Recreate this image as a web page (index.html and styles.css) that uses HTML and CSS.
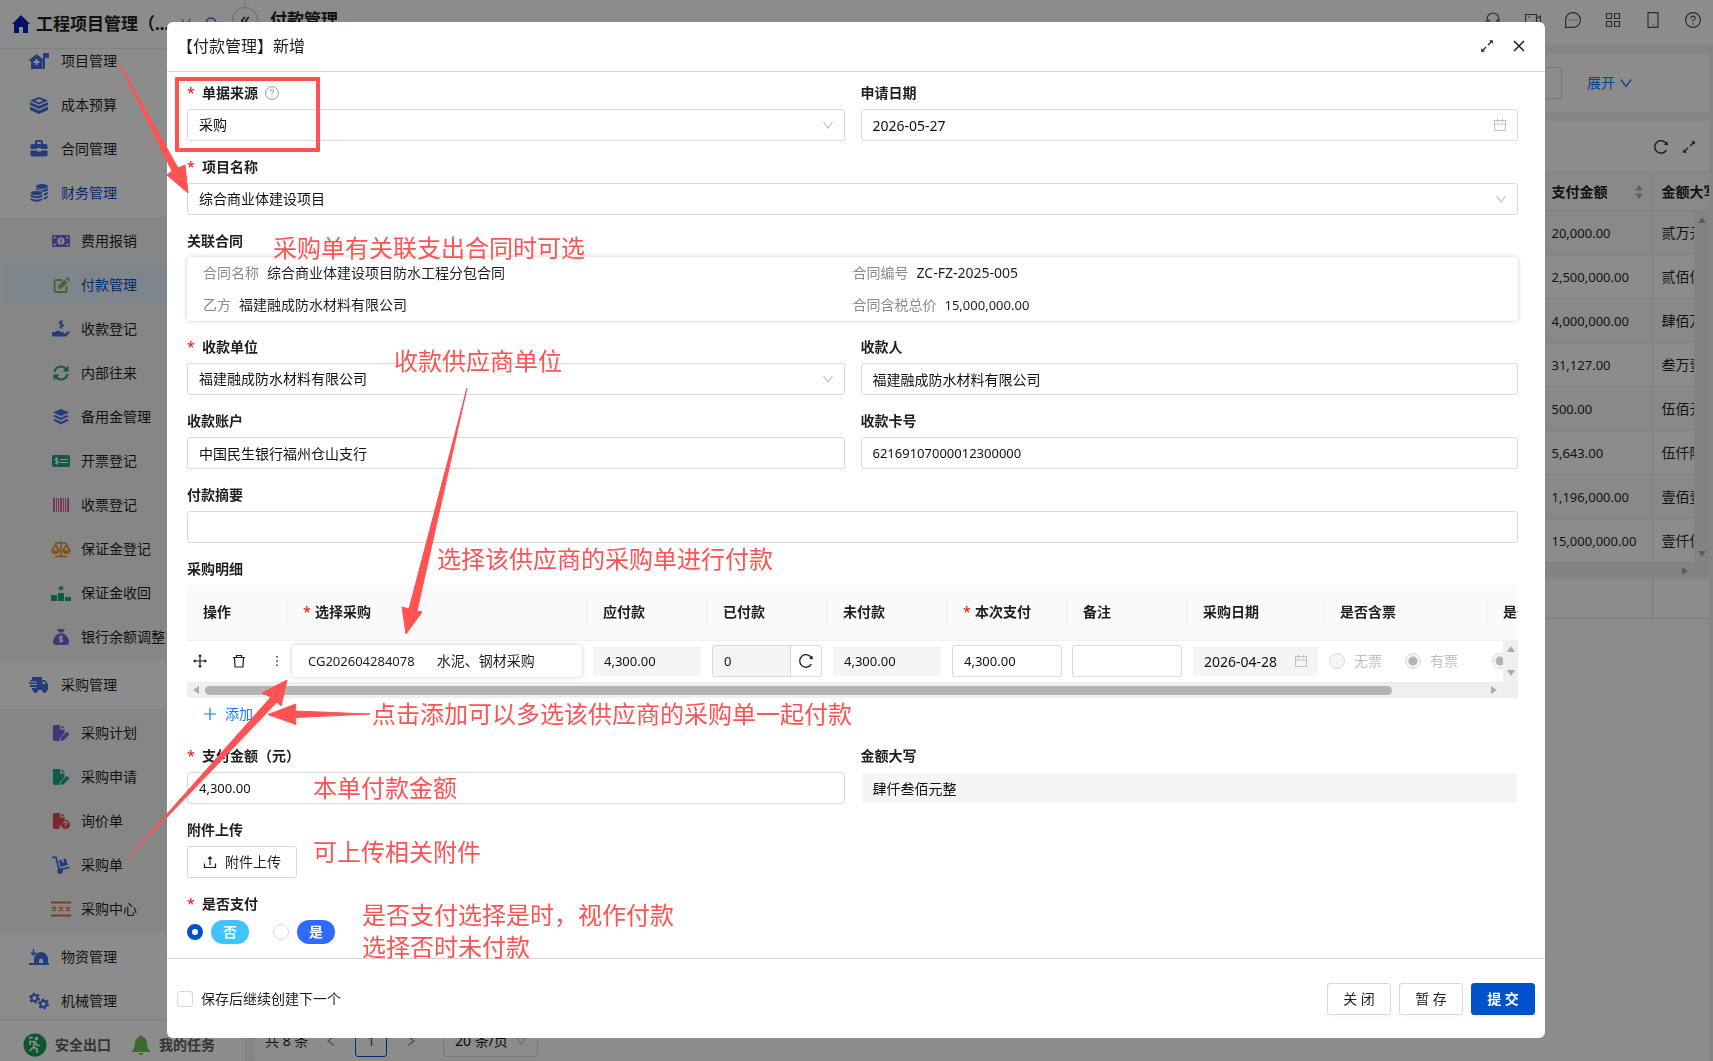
FILE: index.html
```html
<!DOCTYPE html>
<html lang="zh-CN">
<head>
<meta charset="utf-8">
<title>付款管理</title>
<link rel="stylesheet" href="styles.css">
</head>
<body>
<svg class="defs" aria-hidden="true">
  <symbol id="chev" viewBox="0 0 12 12"><path d="M1.500 3 6 9l4.500-6" fill="none" stroke="currentColor" stroke-width="1.100"/></symbol>
  <symbol id="cal" viewBox="0 0 14 14"><path d="M1.500 2.500h11v10h-11zM1.500 6h11M4.500 1v3M9.500 1v3" fill="none" stroke="currentColor"/></symbol>
  <symbol id="expand" viewBox="0 0 14 14"><path d="M8 6l3-3M6 8l-3 3" stroke="currentColor" stroke-width="1.200" fill="none"/><path d="M12.800 1.200v3.600L9.200 1.200zM1.200 12.800V9.200l3.600 3.600z" fill="currentColor"/></symbol>
  <symbol id="reload" viewBox="0 0 16 16"><path d="M13.400 11.200A6.300 6.300 0 1 1 13.600 5" fill="none" stroke="currentColor" stroke-width="1.300"/><path d="M14.600 2.600v3.800l-3.600-.8z" fill="currentColor"/></symbol>
  <symbol id="file" viewBox="0 0 20 20"><path d="M2 1h7v5h5v4l-5 5-1 4H3q-2 0-2-2V2q0-1 1-1zM10.500 1 14 4.600h-3.500z" fill="currentColor"/></symbol>
  <symbol id="pen" viewBox="0 0 20 20"><path d="m10 15 6.500-6.500 3 3L13 18l-3.600.8z" fill="currentColor"/></symbol>
</svg>

<div class="app">
  <aside class="side">
    <header class="side-head">
      <svg class="i18 navy" viewBox="0 0 18 18"><path d="M9 0 0 9h2v9h5v-6h4v6h5V9h2l-3-3z" fill="currentColor"/></svg>
      <strong>工程项目管理（...</strong>
      <svg class="i12 link"><use href="#chev"/></svg>
      <svg class="i14 link" viewBox="0 0 14 14"><circle cx="7" cy="6" r="5" fill="none" stroke="currentColor" stroke-width="1.400"/></svg>
    </header>
    <nav class="menu-clip">
      <ul class="menu">
        <li><a href="#"><svg class="i20 blue" viewBox="0 0 20 20"><path d="M0 9 7.500 3 15 9v1h-1.500v8H2v-8H0zM6.500 8v2h-2v2h2v2h2v-2h2v-2h-2V8z" fill="currentColor" fill-rule="evenodd"/><path d="M14 2h6v5h-4v11h-2z" fill="currentColor"/></svg>项目管理</a></li>
        <li><a href="#"><svg class="i20 blue" viewBox="0 0 20 20"><path d="m10 2 9 3.500-9 4-9-4zM1 7l9 4 9-4v3l-9 4-9-4zM1 11.500l9 4 9-4V15l-9 4-9-4z" fill="currentColor"/><path d="m6 5.500 4-1.500 4 1.500-4 2z" fill="#fff"/></svg>成本预算</a></li>
        <li><a href="#"><svg class="i20 blue" viewBox="0 0 20 20"><path d="M6 5V3q0-2 2-2h4q2 0 2 2v2h3q1.500 0 1.500 1.500V10H12V9H8v1H1.500V6.500Q1.500 5 3 5zm2 0h4V3H8zM1.500 11.500H8v1h4v-1h6.500V16q0 1.500-1.500 1.500H3Q1.500 17.500 1.500 16z" fill="currentColor" fill-rule="evenodd"/></svg>合同管理</a></li>
        <li><a href="#" class="active"><svg class="i20 blue" viewBox="0 0 20 20"><g fill="currentColor"><ellipse cx="13" cy="3.500" rx="6" ry="2.500"/><path d="M7 5q6 4 12 0v2q-1.500 2-5 2-2-2-7-2zM15 10q3 0 4-1.500v2q-1 2-4 2zM15 14q3 0 4-1.500v2q-1 1.500-4 2z"/><ellipse cx="7.500" cy="10" rx="6" ry="2"/><path d="M1.500 11.500q6 3.500 12 0v2q-6 3.500-12 0zM1.500 15q6 3.500 12 0v2q-6 3.500-12 0z"/></g></svg>财务管理</a></li>
        <li class="group">
          <ul class="sub">
            <li><a href="#"><svg class="i18 purple" viewBox="0 0 18 18"><rect y="3" width="18" height="12" rx="1" fill="currentColor"/><circle cx="9" cy="9" r="3.500" fill="#fff"/><path d="M8 7.500h1.500v3M2 7V5h2M14 5h2v2M2 11v2h2M14 13h2v-2" fill="none" stroke="#fff"/><path d="M8.300 7h1.400v4H8.300z" fill="currentColor"/></svg>费用报销</a></li>
            <li><a href="#" class="active chosen"><svg class="i18 green" viewBox="0 0 18 18"><path d="M10 4H4Q2.500 4 2.500 5.500v9Q2.500 16 4 16h9q1.500 0 1.500-1.500V10" fill="none" stroke="currentColor" stroke-width="2"/><path d="m6.500 9.500 6-6 3 3-6 6-3.500.7zM13.500 2.500 15 1l3 2.500-1.500 2z" fill="currentColor"/></svg>付款管理</a></li>
            <li><a href="#"><svg class="i18 blue" viewBox="0 0 18 18"><path d="M0 12h3q3-2.500 6 0h2.500q1 1-.5 1.500H8h5l3.500-2.300q1.500 0 1 1.300L14 16.500H0z" fill="currentColor"/><path d="M11 3Q8.500 1.500 7.500 3T9.300 5.200 11 7 7 8M9.200 1v9" transform="translate(0 -1)" fill="none" stroke="currentColor" stroke-width="1.200"/></svg>收款登记</a></li>
            <li><a href="#"><svg class="i18 teal" viewBox="0 0 18 18"><path d="M2.500 8A6.500 6.500 0 0 1 14 5M15.500 10A6.500 6.500 0 0 1 4 13" fill="none" stroke="currentColor" stroke-width="2.200"/><path d="M16.500 1.500v6h-6zM1.500 16.500v-6h6z" fill="currentColor"/></svg>内部往来</a></li>
            <li><a href="#"><svg class="i18 blue" viewBox="0 0 18 18"><path d="m9 1 8 3.500L9 8 1 4.500zM3 7l6 2.700L15 7l2 1.200L9 12 1 8.200zM3 11l6 2.700L15 11l2 1.200L9 16.500 1 12.200z" fill="currentColor"/></svg>备用金管理</a></li>
            <li><a href="#"><svg class="i18 teal" viewBox="0 0 18 18"><rect y="3" width="18" height="12" rx="1.500" fill="currentColor"/><path d="M8 7.500h8M8 10.500h8M6 7Q4.500 6 3.500 7T5 9t1 1.800-3 .4M4.600 5.200v7.600" fill="none" stroke="#fff" stroke-width="1.200"/></svg>开票登记</a></li>
            <li><a href="#"><svg class="i18 pink" viewBox="0 0 18 18"><path d="M1 2h2v14H1zM4 2h1v14H4zM6 2h1v14H6zM8 2h2v14H8zM11 2h1v14h-1zM13 2h1v14h-1zM15 2h2v14h-2z" fill="currentColor"/></svg>收票登记</a></li>
            <li><a href="#"><svg class="i20 orange" viewBox="0 0 20 20"><path d="M4 4h12M10 2v15M4 17.500h12M1 12l3.500-6.500L8 12M12 12l3.500-6.500L19 12" fill="none" stroke="currentColor" stroke-width="1.600"/><path d="M0 11.500h9Q8 15 4.500 15T0 11.500zM11 11.500h9q-1 3.500-4.500 3.500T11 11.500z" fill="currentColor"/></svg>保证金登记</a></li>
            <li><a href="#"><svg class="i20 teal" viewBox="0 0 20 20"><path d="M0 12h6v6H0zM7 10h6v8H7zM14 14h6v4h-6zM10 2l.9 1.900 2.100.3-1.500 1.500.3 2.100-1.800-1-1.800 1 .3-2.100L7 4.200l2.100-.3z" fill="currentColor"/></svg>保证金收回</a></li>
            <li><a href="#"><svg class="i18 purple" viewBox="0 0 18 18"><path d="M5 1h8l-2 3.500H7zM6.500 5.500h5Q17 9 17 14q0 3-3 3H4q-3 0-3-3 0-5 5.500-8.500z" fill="currentColor"/><path d="M11 9Q9 7.800 7.800 9T9 11.200t1.500 1.600-3.200.6M9 7.200v7.600" fill="none" stroke="#fff" stroke-width="1.100"/></svg>银行余额调整</a></li>
          </ul>
        </li>
        <li><a href="#"><svg class="i20 blue" viewBox="0 0 20 20"><path d="M3 2h10v3h3l3 4v6h-1a2.500 2.500 0 0 1-5 0H9a2.500 2.500 0 0 1-5 0H3v-2h4v-1H1v-2h7V9H0V7.500h8v-1H1V5h2zm10.500 4.500V9H17l-2-2.500z" fill="currentColor" fill-rule="evenodd"/><circle cx="6.500" cy="15.500" r="2.200" fill="currentColor"/><circle cx="15.500" cy="15.500" r="2.200" fill="currentColor"/></svg>采购管理</a></li>
        <li class="group">
          <ul class="sub">
            <li><a href="#"><svg class="i18 purple" viewBox="0 0 20 20"><use href="#file"/><use href="#pen"/></svg>采购计划</a></li>
            <li><a href="#"><svg class="i18 teal" viewBox="0 0 20 20"><use href="#file"/><use href="#pen"/></svg>采购申请</a></li>
            <li><a href="#"><svg class="i18 red" viewBox="0 0 20 20"><use href="#file"/><circle cx="15" cy="14" r="5" fill="currentColor"/><path d="M13.200 13q0-2 1.800-2t1.800 1.500q0 1-1.800 1.500v1M15 16v1.200" fill="none" stroke="#fff" stroke-width="1.200"/></svg>询价单</a></li>
            <li><a href="#"><svg class="i18 blue" viewBox="0 0 20 20"><path d="M0 1.500h4.500L8 15.500l11.500-3" fill="none" stroke="currentColor" stroke-width="2"/><path d="m7.500 5 3-.8 1 3 2-.5-1-3 3-.8 2 7-8 2.200z" fill="currentColor"/><circle cx="9" cy="17" r="3" fill="currentColor"/></svg>采购单</a></li>
            <li><a href="#"><svg class="i20 rust" viewBox="0 0 20 20"><path d="M0 3.500h20M0 16.500h20" stroke="currentColor" stroke-width="2"/><path d="m1 8 4 4M5 8l-4 4M8 8l4 4M12 8l-4 4M15 8l4 4M19 8l-4 4" stroke="currentColor" stroke-width="1.500"/></svg>采购中心</a></li>
          </ul>
        </li>
        <li><a href="#"><svg class="i20 blue" viewBox="0 0 20 20"><path d="M4.500 2v6M2 5.500 4.500 8 7 5.500" fill="none" stroke="currentColor" stroke-width="1.500"/><path d="M0 16h5v-5q2-6 7-6t7 6v5h1v2H0zm10 0h4v-3q-2-3-4 0z" fill="currentColor" fill-rule="evenodd"/></svg>物资管理</a></li>
        <li><a href="#"><svg class="i20 blue" viewBox="0 0 20 20"><circle cx="5.500" cy="7" r="3" fill="none" stroke="currentColor" stroke-width="2"/><circle cx="5.500" cy="7" r="4.500" fill="none" stroke="currentColor" stroke-width="2" stroke-dasharray="2.350"/><circle cx="14.500" cy="13" r="3" fill="none" stroke="currentColor" stroke-width="2"/><circle cx="14.500" cy="13" r="4.500" fill="none" stroke="currentColor" stroke-width="2" stroke-dasharray="2.350"/></svg>机械管理</a></li>
      </ul>
    </nav>
    <footer class="side-foot">
      <a href="#"><svg class="i24" viewBox="0 0 24 24"><circle cx="12" cy="12" r="11.500" fill="#1a9c5c"/><circle cx="13.500" cy="5.500" r="1.800" fill="#fff"/><path d="M7 12V8.500h5l2 4h3M11.500 9l-1 5 3.500 2v4M10.500 14 6.500 18M7 6v-1.500h3" fill="none" stroke="#fff" stroke-width="1.700"/></svg>安全出口</a>
      <a href="#"><svg class="i20 bell" viewBox="0 0 20 20"><path d="M10 0q1.200 0 1.200 1.500Q16 3 16 8q0 5 3 8v1H1v-1q3-3 3-8 0-5 4.800-6.500Q8.800 0 10 0zM7.500 18h5Q12 20 10 20t-2.500-2z" fill="currentColor"/></svg>我的任务</a>
    </footer>
  </aside>

  <main class="main">
    <header class="topbar">
      <button class="fold" aria-label="收起">«</button>
      <h1>付款管理</h1>
      <div class="tools">
        <svg class="i16" viewBox="0 0 16 16"><path d="M2 11V7a6 6 0 0 1 12 0v4M2 8h2v4H2zM14 8h-2v4h2z"/></svg>
        <svg class="i16" viewBox="0 0 16 16"><path d="M.5 2.500h11v11H.5zM11.500 6.500l4-2.500v8l-4-2.500M3 5h2"/></svg>
        <svg class="i16" viewBox="0 0 16 16"><path d="M.6 15.400V8A7.400 7.400 0 1 1 8 15.400zM4 8h1.500M7.300 8h1.500M10.600 8h1.500"/></svg>
        <svg class="i16" viewBox="0 0 16 16"><path d="M1.500 1.500h5v5h-5zM9.500 1.500h5v5h-5zM1.500 9.500h5v5h-5zM9.500 9.500h5v5h-5z"/></svg>
        <svg class="i16" viewBox="0 0 16 16"><path d="M3 .6h10v14.800H3zM7.500 13h1"/></svg>
        <svg class="i16" viewBox="0 0 16 16"><circle cx="8" cy="8" r="7.400"/><path d="M5.800 6.500q0-2.300 2.200-2.300t2.200 2Q10.200 7.500 8 8.500v1M8 11v1.400"/></svg>
      </div>
    </header>
    <section class="panel filters">
      <button class="btn">清 空</button>
      <a href="#" class="more">展开 <svg class="i14"><use href="#chev"/></svg></a>
    </section>
    <section class="panel list">
      <div class="list-tools"><svg class="i16"><use href="#reload"/></svg><svg class="i14"><use href="#expand"/></svg></div>
      <div class="list-wrap">
        <table class="records">
          <colgroup><col><col class="c-pay"><col class="c-cap"></colgroup>
          <thead><tr><th></th><th><div class="sort">支付金额<svg viewBox="0 0 8 14"><path d="M4 0l4 5.500H0zM4 14 0 8.500h8z" fill="currentColor"/></svg></div></th><th>金额大写</th></tr></thead>
          <tbody>
            <tr><td></td><td>20,000.00</td><td>贰万元整</td></tr>
            <tr><td></td><td>2,500,000.00</td><td>贰佰伍拾</td></tr>
            <tr><td></td><td>4,000,000.00</td><td>肆佰万元</td></tr>
            <tr><td></td><td>31,127.00</td><td>叁万壹仟</td></tr>
            <tr><td></td><td>500.00</td><td>伍佰元整</td></tr>
            <tr><td></td><td>5,643.00</td><td>伍仟陆佰</td></tr>
            <tr><td></td><td>1,196,000.00</td><td>壹佰壹拾</td></tr>
            <tr><td></td><td>15,000,000.00</td><td>壹仟伍佰</td></tr>
          </tbody>
        </table>
        <div class="vbar"><i class="up"></i><i class="down"></i></div>
        <div class="hbar tail"><i class="right"></i></div>
        <div class="sum"><span></span><span></span></div>
      </div>
      <div class="pager">
        <span class="total">共 8 条</span>
        <button class="arrow" aria-label="上一页"><svg class="i12 turn-l"><use href="#chev"/></svg></button>
        <button class="page">1</button>
        <button class="arrow" aria-label="下一页"><svg class="i12 turn-r"><use href="#chev"/></svg></button>
        <div class="pick size"><select aria-label="每页条数"><option>20 条/页</option></select><svg class="i12"><use href="#chev"/></svg></div>
      </div>
    </section>
  </main>
</div>

<div class="mask">
  <form class="dialog" role="dialog" aria-labelledby="dlg-title">
    <header class="dlg-head">
      <h2 id="dlg-title">【付款管理】新增</h2>
      <button type="button" class="bare" aria-label="全屏"><svg class="i14"><use href="#expand"/></svg></button>
      <button type="button" class="bare" aria-label="关闭"><svg class="i12" viewBox="0 0 12 12"><path d="m1 1 10 10M11 1 1 11" stroke="currentColor" stroke-width="1.500"/></svg></button>
    </header>
    <div class="dlg-body">
      <div class="field">
        <label for="src" class="req">单据来源 <svg class="i14 hint" viewBox="0 0 14 14"><circle cx="7" cy="7" r="6.400"/><path d="M5.200 5.700q0-1.900 1.800-1.900t1.800 1.600q0 1-1.800 1.800v1M7 9.500v1.200"/></svg></label>
        <div class="pick"><select id="src"><option>采购</option></select><svg class="i12"><use href="#chev"/></svg></div>
      </div>
      <div class="field">
        <label for="date">申请日期</label>
        <div class="pick"><input id="date" class="date" value="2026-05-27"><svg class="i14"><use href="#cal"/></svg></div>
      </div>
      <div class="field wide">
        <label for="proj" class="req">项目名称</label>
        <div class="pick"><select id="proj"><option>综合商业体建设项目</option></select><svg class="i12"><use href="#chev"/></svg></div>
      </div>
      <div class="field wide">
        <span class="cap">关联合同</span>
        <dl class="contract">
          <div><dt>合同名称</dt><dd>综合商业体建设项目防水工程分包合同</dd></div>
          <div><dt>合同编号</dt><dd>ZC-FZ-2025-005</dd></div>
          <div><dt>乙方</dt><dd>福建融成防水材料有限公司</dd></div>
          <div><dt>合同含税总价</dt><dd class="num">15,000,000.00</dd></div>
        </dl>
      </div>
      <div class="field">
        <label for="payee" class="req">收款单位</label>
        <div class="pick"><select id="payee"><option>福建融成防水材料有限公司</option></select><svg class="i12"><use href="#chev"/></svg></div>
      </div>
      <div class="field"><label for="person">收款人</label><input id="person" value="福建融成防水材料有限公司"></div>
      <div class="field"><label for="bank">收款账户</label><input id="bank" value="中国民生银行福州仓山支行"></div>
      <div class="field"><label for="card">收款卡号</label><input id="card" class="num" value="62169107000012300000"></div>
      <div class="field wide"><label for="memo">付款摘要</label><input id="memo"></div>
      <div class="field wide">
        <span class="cap">采购明细</span>
        <div class="detail">
          <table>
            <colgroup><col class="w100"><col class="w300"><col class="w120"><col class="w120"><col class="w120"><col class="w120"><col class="w120"><col class="w137"><col class="w163"><col class="w163"></colgroup>
            <thead><tr><th>操作</th><th><b class="star">*</b>选择采购</th><th>应付款</th><th>已付款</th><th>未付款</th><th><b class="star">*</b>本次支付</th><th>备注</th><th>采购日期</th><th>是否含票</th><th>是否</th></tr></thead>
            <tbody><tr>
              <td><div class="ops">
                <svg class="i14" viewBox="0 0 14 14"><path d="M7 1v12M1 7h12" stroke="currentColor" stroke-width="1.200"/><path d="m7 0 2 2.500H5zM7 14l-2-2.500h4zM0 7l2.500-2v4zM14 7l-2.500 2V5z" fill="currentColor"/></svg>
                <svg class="i14" viewBox="0 0 14 14"><path d="M1 3.500h12M4.500 3.500v-2h5v2M2.500 3.500l.6 9.500h7.800l.6-9.500" fill="none" stroke="currentColor" stroke-width="1.200"/></svg>
                <svg class="i14" viewBox="0 0 14 14"><path d="M6.300 2h1.400v1.400H6.300zM6.300 6.300h1.400v1.400H6.300zM6.300 10.600h1.400V12H6.300z" fill="currentColor"/></svg>
              </div></td>
              <td><div class="order"><span class="num">CG202604284078</span><span>水泥、钢材采购</span></div></td>
              <td><input class="num" disabled value="4,300.00" aria-label="应付款"></td>
              <td><div class="combo"><input class="num" disabled value="0" aria-label="已付款"><button type="button" aria-label="刷新"><svg class="i16"><use href="#reload"/></svg></button></div></td>
              <td><input class="num" disabled value="4,300.00" aria-label="未付款"></td>
              <td><input class="num" value="4,300.00" aria-label="本次支付"></td>
              <td><input aria-label="备注"></td>
              <td><div class="pick"><input class="date" disabled value="2026-04-28" aria-label="采购日期"><svg class="i14"><use href="#cal"/></svg></div></td>
              <td><div class="opts"><label><input type="radio" name="inv" disabled>无票</label><label><input type="radio" name="inv" disabled checked>有票</label></div></td>
              <td><div class="opts"><label><input type="radio" name="in2" disabled checked>是</label></div></td>
            </tr></tbody>
          </table>
          <div class="vbar"><i class="up"></i><i class="down"></i></div>
          <div class="hbar"><i class="left"></i><b class="thumb"></b><i class="right"></i></div>
        </div>
        <button type="button" class="add"><svg class="i14" viewBox="0 0 14 14"><path d="M7 1v12M1 7h12" stroke="currentColor" stroke-width="1.200"/></svg>添加</button>
      </div>
      <div class="field"><label for="amt" class="req">支付金额（元）</label><input id="amt" class="num" value="4,300.00"></div>
      <div class="field"><label for="caps">金额大写</label><input id="caps" disabled value="肆仟叁佰元整"></div>
      <div class="field wide">
        <span class="cap">附件上传</span>
        <button type="button" class="btn upload"><svg class="i14" viewBox="0 0 14 14"><path d="M1.500 8.500v4h11v-4M7 10V3" fill="none" stroke="currentColor" stroke-width="1.200"/><path d="m7 1 2.500 3h-5z" fill="currentColor"/></svg>附件上传</button>
      </div>
      <div class="field wide">
        <span class="cap req">是否支付</span>
        <div class="paid">
          <label><input type="radio" name="paid" checked><span class="pill no">否</span></label>
          <label><input type="radio" name="paid"><span class="pill yes">是</span></label>
        </div>
      </div>
    </div>
    <footer class="dlg-foot">
      <label><input type="checkbox">保存后继续创建下一个</label>
      <button type="button" class="btn">关 闭</button>
      <button type="button" class="btn">暂 存</button>
      <button type="button" class="btn primary">提 交</button>
    </footer>
  </form>
</div>

<div class="notes">
  <svg class="arrows">
    <path d="M118 61 178 168l7-3 3 28-21-18 5-4zM467 388 417 611l5 1-16 22-4-27 7 2zM126 860 277 702l4 4 6-26-25 13 9 4zM370 714l-75-3 1-7-28 10.500 28 10-1-7z"/>
  </svg>
  <i class="box"></i>
  <p class="n1">采购单有关联支出合同时可选</p>
  <p class="n2">收款供应商单位</p>
  <p class="n3">选择该供应商的采购单进行付款</p>
  <p class="n4">点击添加可以多选该供应商的采购单一起付款</p>
  <p class="n5">本单付款金额</p>
  <p class="n6">可上传相关附件</p>
  <p class="n7">是否支付选择是时，视作付款<br>选择否时未付款</p>
</div>
</body>
</html>
```
FILE: styles.css
```css
*{box-sizing:border-box}
html,body{height:100%}
body{margin:0;overflow:hidden;font:14px/22px "Noto Sans","Noto Sans CJK SC",sans-serif;color:#1f1f1f;background:#f0f2f5}
ul,dl,dd,p,h1,h2{margin:0;padding:0}
ul{list-style:none}
a{color:inherit;text-decoration:none}
svg{flex:none;display:block}
button,input,select{font:inherit;color:inherit}
.defs{position:absolute;width:0;height:0}
.i12{width:12px;height:12px}
.i14{width:14px;height:14px}
.i16{width:16px;height:16px}
.i18{width:18px;height:18px}
.i20{width:20px;height:20px}
.i24{width:24px;height:24px}
.navy{color:#0a20c0}
.blue{color:#426ee0}
.purple{color:#7a62dc}
.green{color:#7cb661}
.teal{color:#20a386}
.pink{color:#d763a4}
.orange{color:#e8921f}
.red{color:#e04a4a}
.rust{color:#e27438}
.bell{color:#6fbf5a}
.link{color:#1677ff}
.num{font-size:13px}

/* page shell */
.app{display:flex;height:100vh}
.side{width:246px;flex:none;display:flex;flex-direction:column;background:#fff;border-right:1px solid #e4e6ea}
.side-head{height:49px;flex:none;display:flex;align-items:center;gap:6px;padding-left:12px;border-bottom:1px solid #ebebeb}
.side-head strong{font-size:17px;width:138px;overflow:hidden;white-space:nowrap}
.side-head .i12{margin:0 6px 4px 0}
.menu-clip{flex:1;min-height:0;overflow:hidden}
.menu{margin-top:-8px;display:flex;flex-direction:column;gap:4px}
.menu a{display:flex;align-items:center;height:40px;gap:12px;padding-left:29px}
.menu .active{color:#0052cc}
.sub{display:flex;flex-direction:column;gap:4px;padding:4px 0;background:#f5f5f5}
.menu .sub a{margin-left:3px;padding-left:49px;gap:11px}
.sub .i20{margin:0 -1px}
.chosen{background:#e6f4ff}
.side-foot{height:42px;flex:none;display:flex;align-items:center;padding:8px 0 0 23px;gap:20px;border-top:1px solid #e8e8e8;font-weight:bold;color:#606060}
.side-foot a{display:flex;align-items:center;gap:8px}

.main{flex:1;min-width:0;display:flex;flex-direction:column}
.topbar{height:44px;flex:none;display:flex;align-items:center;background:#fff;padding:0 12px 4px 0}
.topbar h1{font-size:17px;line-height:24px;margin-left:12px}
.fold{width:26px;height:26px;margin-left:-14px;border:1px solid #bbb;border-radius:13px;background:#fff;padding:0 0 3px;font-size:20px;line-height:20px}
.tools{margin-left:auto;display:flex;gap:24px;color:#555}
.tools svg{fill:none;stroke:currentColor;stroke-width:1.2}
.panel{background:#fff;border-radius:3px;margin:0 4px 0 8px}
.filters{height:58px;flex:none;margin-top:10px;display:flex;align-items:center;justify-content:flex-end;gap:25px;padding-right:76px}
.more{display:flex;align-items:center;gap:4px;color:#1677ff}
.list{flex:1;margin-top:9px;display:flex;flex-direction:column;min-height:0}
.list-tools{height:51px;flex:none;display:flex;align-items:center;justify-content:flex-end;gap:13px;padding-right:13px}
.list-wrap{position:relative;overflow:hidden}
.records{width:100%;table-layout:fixed;border-collapse:collapse}
.c-pay{width:110px}
.c-cap{width:57px}
.records th{height:38px;background:#fafafa;text-align:left;border-top:1px solid #eaeaea}
.records th,.records td{padding:0 9px;border-right:1px solid #e8e8e8;border-bottom:1px solid #e8e8e8;white-space:nowrap;overflow:hidden}
.records th+th+th,.records td+td+td{border-right:0}
.records td{height:44px}
.records td:nth-child(2){font-size:13px}
.records tr:nth-child(odd) td{background:#fafafa}
.sort{display:flex;justify-content:space-between;align-items:center}
.sort svg{width:8px;height:14px;color:#aaa}
.vbar{position:absolute;right:0;width:15px;background:#efefef;display:flex;flex-direction:column;justify-content:space-between;align-items:center;padding:6px 0}
.list-wrap .vbar{top:39px;height:352px}
.up,.down{border:4px solid transparent}
.up{border-top:0;border-bottom:6px solid #aaa}
.down{border-bottom:0;border-top:6px solid #aaa}
.left,.right{border:4px solid transparent}
.left{border-left:0;border-right:6px solid #aaa}
.right{border-right:0;border-left:6px solid #aaa}
.hbar{height:16px;background:#efefef;display:flex;align-items:center;padding:0 21px 0 6px;justify-content:space-between}
.hbar.tail{justify-content:flex-end}
.sum{height:40px;display:flex;justify-content:flex-end;border-bottom:1px solid #e4e4e4}
.sum span{width:57px;border-left:1px solid #e4e4e4}
.sum span:first-child{width:110px}
.pager{margin-top:auto;display:flex;align-items:center;height:40px;padding-left:11px}
.total{width:54px}
.arrow{border:0;background:none;width:24px;padding:6px;margin:0 12px;color:#888}
.turn-l{transform:rotate(90deg)}
.turn-r{transform:rotate(-90deg)}
.page{width:32px;height:32px;border:1px solid #0052cc;border-radius:3px;background:#fff;color:#0052cc}
.arrow:first-of-type{margin:0 12px 0 0}
.pick.size{width:95px;margin-left:8px}

/* controls */
input,select{width:100%;height:32px;border:1px solid #d9d9d9;border-radius:3px;background:#fff;padding:0 11px;color:#111;display:block;outline:0;appearance:none}
input:disabled{border-color:transparent;background:#f5f5f5 padding-box;color:#111;opacity:1}
.pick{position:relative}
.pick svg{position:absolute;right:11px;top:10px;color:#bfbfbf}
.pick .i14{top:9px}
.btn{height:32px;min-width:64px;border:1px solid #d9d9d9;border-radius:3px;background:#fff;padding:0 15px;box-shadow:0 2px 0 rgba(0,0,0,.02);white-space:nowrap}
.primary{background:#0052cc;border-color:#0052cc;color:#fff;font-weight:bold}
input[type=radio]{width:16px;height:16px;border-radius:8px;padding:0;margin:0;flex:none}
input[type=radio]:checked{border:5px solid #0052cc}
input[type=radio]:disabled{border:1px solid #d9d9d9;background:#f5f5f5}
input[type=radio]:disabled:checked{background:radial-gradient(circle,#b4b4b4 0 4px,#f5f5f5 5px)}
input[type=checkbox]{width:16px;height:16px;padding:0;margin:0}

/* dialog */
.mask{position:fixed;inset:0;background:rgba(0,0,0,.45);padding:22px 168px 23px 167px;display:flex}
.dialog{flex:1;min-width:0;display:flex;flex-direction:column;background:#fff;border-radius:6px;overflow:hidden}
.dlg-head{height:50px;flex:none;display:flex;align-items:center;padding:0 20px 2px 10px;gap:19px;border-bottom:1px solid #d4d4d4}
.dlg-head h2{font-size:16px;font-weight:normal;margin-right:auto}
.bare{border:0;background:none;padding:0}
.dlg-body{flex:1;min-height:0;overflow:hidden;padding:5px 27px 0 20px;display:grid;grid-template-columns:1fr 1fr;gap:10px 16px;align-content:start}
.field{min-width:0}
.wide{grid-column:1/-1}
.field>label,.cap{display:flex;align-items:center;height:32px;padding-bottom:1px;font-weight:bold}
.req::before,.star{content:"*";color:#f00;width:15px;font-weight:normal}
.star{display:inline-block;width:12px}
.hint{margin-left:7px;fill:none;stroke:#999}
.contract{display:grid;grid-template-columns:1fr 1fr;padding:0 16px;border-radius:4px;box-shadow:0 0 4px rgba(0,0,0,.22)}
.contract div{display:flex;gap:8px;align-items:center;height:32px}
.contract dt{color:#8c8c8c}
.detail{position:relative;overflow:hidden}
.detail table{table-layout:fixed;border-collapse:collapse;width:1463px}
.w100{width:100px}
.w300{width:300px}
.w120{width:120px}
.w137{width:137px}
.w163{width:163px}
.detail th{height:55px;text-align:left;padding:0 16px;border-bottom:1px solid #f0f0f0;background:linear-gradient(#ebebeb,#ebebeb) right center/1px 24px no-repeat #fafafa}
.detail td{height:42px;padding:0 5px}
.detail .vbar{top:55px;height:42px}
.ops{display:flex;justify-content:space-between;padding:0 0 0 1px;margin-right:-2px}
.order{height:32px;display:flex;align-items:center;gap:22px;padding:0 16px;border-radius:4px;box-shadow:0 0 4px rgba(0,0,0,.22)}
.combo{display:flex}
.combo input,.combo input:disabled{border:1px solid #d9d9d9;border-radius:3px 0 0 3px}
.combo button{width:32px;flex:none;margin-left:-1px;padding:0 7px;border:1px solid #d9d9d9;border-radius:0 3px 3px 0;background:#fff}
.opts{display:flex;gap:23px;color:#bfbfbf}
.opts label{display:flex;align-items:center;gap:9px}
.thumb{height:9px;border-radius:5px;background:#b4b4b4;width:91%;margin:0 auto 0 6px}
.add{display:flex;align-items:center;gap:8px;height:32px;border:0;background:none;padding:0 16px;color:#1677ff}
.upload{display:flex;align-items:center;gap:8px}
.paid{display:flex;gap:24px}
.paid label{display:flex;align-items:center;gap:8px}
.pill{width:38px;height:24px;line-height:24px;border-radius:12px;text-align:center;color:#fff;font-weight:bold}
.no{background:#40c4ff}
.yes{background:#2f6bff}
.dlg-foot{height:80px;flex:none;display:flex;align-items:center;gap:8px;padding:0 10px;border-top:1px solid #d4d4d4}
.dlg-foot label{display:flex;align-items:center;gap:8px;margin-right:auto}

/* callouts drawn over the screen */
.notes{position:absolute;inset:0;color:#ff5252;font-size:24px;line-height:32px;pointer-events:none;overflow:hidden}
.notes p{position:absolute;white-space:nowrap;font-family:"Noto Sans CJK SC",sans-serif}
.arrows{position:absolute;width:100%;height:100%;fill:#ff5252;stroke:#ff5252}
.box{position:absolute;left:175px;top:77px;width:145px;height:75px;border:4px solid #ff5252;border-radius:1px}
.n1{left:273px;top:231px}
.n2{left:394px;top:344px}
.n3{left:437px;top:542px}
.n4{left:372px;top:697px}
.n5{left:313px;top:771px}
.n6{left:313px;top:835px}
.n7{left:362px;top:898px}
```
